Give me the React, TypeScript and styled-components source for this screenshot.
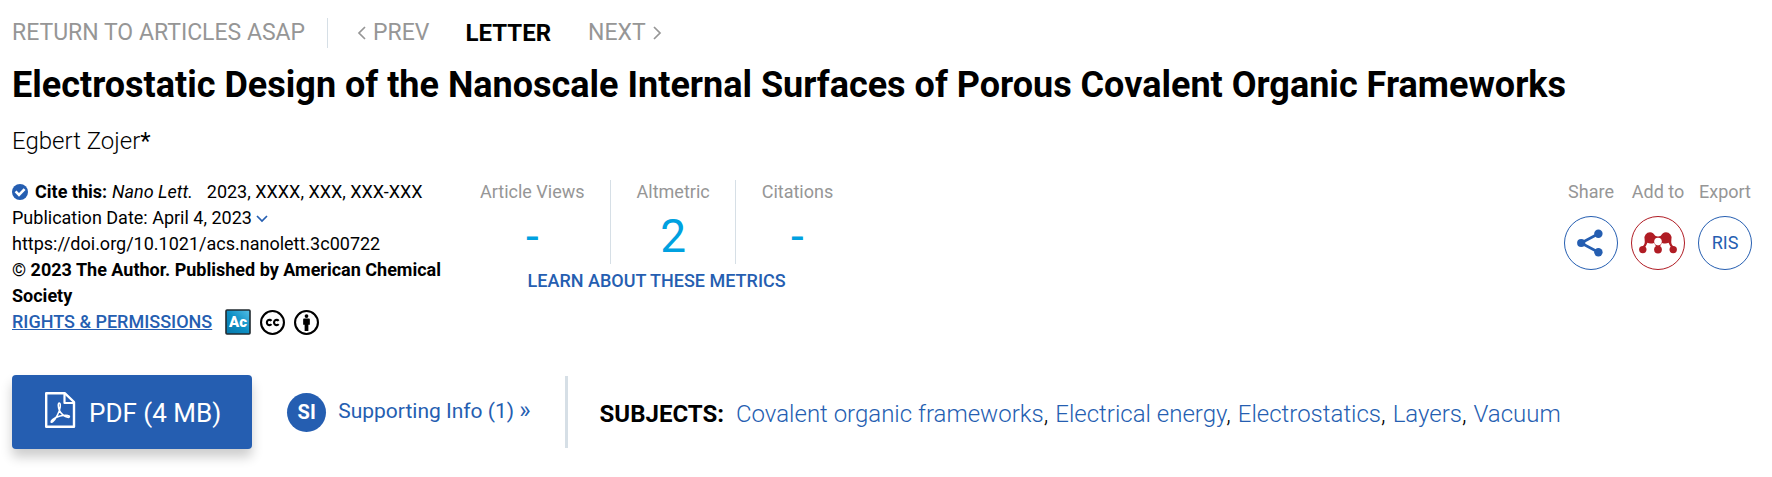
import styled, { createGlobalStyle } from "styled-components";

const GlobalStyle = createGlobalStyle`
  *, *::before, *::after { box-sizing: border-box; }
  body {
    margin: 0;
    background: #fff;
    color: #000;
    font-family: Roboto, "Liberation Sans", sans-serif;
  }
  a { color: inherit; text-decoration: none; }
  svg { display: block; flex: none; }
`;

const blue = "#255eb1";
const grey = "#969696";
const rule = "#d6dfe6";

const Article = styled.article`
  padding: 18px 20px 28px 12px;
`;

const Nav = styled.nav`
  display: flex;
  align-items: center;
  height: 30px;
  font-size: 23px;
  line-height: 30px;
  color: ${grey};
`;

const ReturnLink = styled.a`
  padding-right: 22px;
  margin-right: 28px;
  border-right: 1px solid ${rule};
`;

const NavLink = styled.a`
  display: flex;
  align-items: center;
  gap: 6px;
`;

const NavType = styled.strong`
  margin: 0 37px 0 36px;
  font-size: 24px;
  font-weight: 700;
  color: #000;
`;

const Title = styled.h1`
  margin: 14px 0 0;
  font-size: 36px;
  line-height: 46px;
  font-weight: 700;
`;

const Author = styled.p`
  margin: 18px 0 0;
  font-size: 24px;
  line-height: 30px;
  font-weight: 300;
`;

const CorrespondingLink = styled.a`
  font-weight: 400;
`;

const Details = styled.div`
  display: flex;
  align-items: flex-start;
  margin-top: 23px;
  font-size: 18px;
  line-height: 26px;
`;

const Citation = styled.div`
  width: 440px;
  margin-right: 28px;
`;

const Line = styled.p<{ $bold?: boolean }>`
  display: ${(p) => (p.$bold ? "block" : "flex")};
  align-items: center;
  margin: 0;
  font-weight: ${(p) => (p.$bold ? 700 : 400)};
`;

const CiteLabel = styled.strong`
  margin: 0 5px 0 7px;
  font-weight: 700;
`;

const Journal = styled.em`
  margin-right: 14px;
`;

const DateButton = styled.button`
  padding: 0 4px;
  border: 0;
  background: none;
`;

const Rights = styled.div`
  display: flex;
  align-items: center;
  gap: 9px;
`;

const RightsLink = styled.a`
  margin-right: 4px;
  font-weight: 500;
  color: ${blue};
  text-decoration: underline;
`;

const Metrics = styled.div`
  display: flex;
  flex-direction: column;
  align-items: center;
  padding-top: 1px;
`;

const MetricList = styled.div`
  display: flex;
`;

const Metric = styled.div`
  padding: 0 25px 0 26px;
  height: 84px;
  text-align: center;
  color: ${grey};
  & + & { border-left: 1px solid ${rule}; }
  &:first-child { padding-left: 0; }
  &:last-child { padding-right: 0; }
`;

const MetricLabel = styled.div`
  line-height: 24px;
`;

const MetricValue = styled.div`
  margin-top: 4px;
  font-size: 46px;
  line-height: 56px;
  color: #00a1e0;
`;

const LearnLink = styled.a`
  margin-top: 4px;
  font-weight: 500;
  color: ${blue};
`;

const Tools = styled.div`
  display: flex;
  gap: 13px;
  margin-left: auto;
  padding-top: 1px;
`;

const Tool = styled.div`
  display: flex;
  flex-direction: column;
  align-items: center;
  gap: 12px;
  width: 54px;
  line-height: 24px;
  white-space: nowrap;
  color: ${grey};
`;

const RoundButton = styled.button<{ $color: string }>`
  display: flex;
  align-items: center;
  justify-content: center;
  width: 54px;
  height: 54px;
  padding: 0;
  border: 1px solid ${(p) => p.$color};
  border-radius: 50%;
  background: #fff;
  color: ${(p) => p.$color};
  font: inherit;
`;

const Actions = styled.div`
  display: flex;
  align-items: center;
  margin-top: 40px;
`;

const PdfButton = styled.button`
  display: flex;
  align-items: center;
  gap: 13px;
  height: 74px;
  padding: 2px 31px 0 32px;
  border: 0;
  border-radius: 4px;
  background: ${blue};
  box-shadow: 0 8px 12px rgba(0, 0, 0, 0.2);
  color: #fff;
  font-family: inherit;
  font-size: 26px;
  line-height: 36px;
  white-space: nowrap;

  svg { margin-bottom: 6px; }
`;

const SupportingLink = styled.a`
  display: flex;
  align-items: center;
  gap: 12px;
  height: 72px;
  margin-left: 35px;
  padding-right: 34px;
  border-right: 3px solid ${rule};
  font-size: 21px;
  line-height: 26px;
  white-space: nowrap;
  color: ${blue};
`;

const SupportingText = styled.span`
  padding-bottom: 4px;
`;

const Guillemet = styled.span`
  font-size: 24px;
`;

const SiBadge = styled.span`
  display: flex;
  align-items: center;
  justify-content: center;
  width: 39px;
  height: 39px;
  border-radius: 50%;
  background: ${blue};
  color: #fff;
  font-size: 20px;
  font-weight: 700;
`;

const Subjects = styled.div`
  display: flex;
  flex-wrap: wrap;
  column-gap: 7px;
  margin-left: 32px;
  padding-top: 4px;
  font-size: 24px;
  line-height: 30px;
  font-weight: 300;
`;

const SubjectsLabel = styled.strong`
  margin-right: 5px;
  font-weight: 700;
`;

const SubjectLink = styled.a`
  color: ${blue};
`;

const Chevron = ({ d, width, height, color }: { d: string; width: number; height: number; color: string }) => (
  <svg width={width} height={height} viewBox={`0 0 ${width} ${height}`} fill="none" stroke={color} strokeWidth="1.7" aria-hidden="true">
    <path d={d} />
  </svg>
);

const CheckIcon = () => (
  <svg width="16" height="16" viewBox="0 0 16 16" aria-hidden="true">
    <circle cx="8" cy="8" r="8" fill={blue} />
    <path d="M3.6 7.4 7 10.8 12.6 5.2" fill="none" stroke="#fff" strokeWidth="2.6" />
  </svg>
);

const AuthorChoiceIcon = () => (
  <svg width="26" height="26" viewBox="0 0 26 26" role="img" aria-label="ACS AuthorChoice">
    <defs>
      <linearGradient id="ac" x1="1" y1="0" x2="0" y2="1">
        <stop offset="0" stopColor="#55c0e8" />
        <stop offset="0.5" stopColor="#0d8fc4" />
        <stop offset="1" stopColor="#0878aa" />
      </linearGradient>
    </defs>
    <rect x="1" y="1" width="24" height="24" rx="1" fill="url(#ac)" stroke="#222b30" strokeWidth="1.6" />
    <text x="13" y="18" textAnchor="middle" fontSize="15" fontWeight="900" fill="#fff">Ac</text>
  </svg>
);

const CcIcon = () => (
  <svg width="25" height="25" viewBox="0 0 24 24" fill="none" stroke="#000" role="img" aria-label="Creative Commons">
    <circle cx="12" cy="12" r="11" strokeWidth="2" />
    <path d="M11 10.4A2.5 2.5 0 1 0 11 13.6M17.9 10.4A2.5 2.5 0 1 0 17.9 13.6" strokeWidth="2" />
  </svg>
);

const ByIcon = () => (
  <svg width="25" height="25" viewBox="0 0 24 24" role="img" aria-label="Attribution">
    <circle cx="12" cy="12" r="11" fill="none" stroke="#000" strokeWidth="2" />
    <circle cx="12" cy="5.8" r="1.8" />
    <path d="M9.6 8.2h4.8a.8.8 0 0 1 .8.8v5.2h-1.4v6h-3.6v-6H8.8V9a.8.8 0 0 1 .8-.8z" />
  </svg>
);

const ShareIcon = () => (
  <svg width="28" height="28" viewBox="0 0 28 28" fill="currentColor" aria-hidden="true">
    <path d="M21 5 4 14 21 23" fill="none" stroke="currentColor" strokeWidth="2.6" />
    <circle cx="4.2" cy="14" r="4.1" />
    <circle cx="21.4" cy="4.8" r="4.2" />
    <circle cx="21.4" cy="23.2" r="4.2" />
  </svg>
);

const MendeleyIcon = () => (
  <svg width="38" height="22" viewBox="0 0 38 22" fill="currentColor" aria-hidden="true">
    <path d="M11 0.2C13.5 0.2 15 1.8 16.2 3.8Q19 5.2 21.8 3.8C23 1.8 24.5 0.2 27 0.2A5.6 5.6 0 0 1 32.4 7.2Q31.6 12.5 34.6 14.5L33.2 16.5Q30.6 14 29.6 10.8Q26.8 12.2 23 11L20.6 15H17.4L15 11Q11.2 12.2 8.4 10.8Q7.4 14 4.8 16.5L3.4 14.5Q6.4 12.5 5.6 7.2A5.6 5.6 0 0 1 11 .2z" />
    <circle cx="19" cy="9.6" r="3.8" fill="#fff" />
    <circle cx="3.8" cy="17.6" r="3.7" />
    <circle cx="19" cy="17.6" r="3.9" />
    <circle cx="34.2" cy="17.6" r="3.7" />
  </svg>
);

const PdfIcon = () => (
  <svg width="32" height="36" viewBox="0 0 32 36" fill="none" stroke="#fff" strokeLinejoin="round" aria-hidden="true">
    <path d="M2.2 1.3H21L30 10V34.7H2.2Z" strokeWidth="2.4" />
    <path d="M20.5 1.5V11H29.8" strokeWidth="2.2" />
    <path d="M15.3 11C13.8 11 14 15 15.4 18.4C17 22 20.5 24.6 24.5 25.4C25.8 25.4 25.8 23.4 24 23.4C19.5 22.8 12.5 24.2 8.6 27.6C6.2 30 6.9 31 8.8 29.6C11.8 27.4 15.6 19.5 16.2 15.2C16.5 12.2 16.1 11 15.3 11Z" strokeWidth="1.5" />
  </svg>
);

const metrics = [
  { label: "Article Views", value: "-" },
  { label: "Altmetric", value: "2" },
  { label: "Citations", value: "-" },
];

const subjects = ["Covalent organic frameworks", "Electrical energy", "Electrostatics", "Layers", "Vacuum"];

export default function App() {
  return (
    <>
      <GlobalStyle />
      <Article>
        <Nav aria-label="Articles">
          <ReturnLink href="#asap">RETURN TO ARTICLES ASAP</ReturnLink>
          <NavLink href="#prev">
            <Chevron d="M9 2 3 8 9 14" width={11} height={16} color={grey} />
            PREV
          </NavLink>
          <NavType>LETTER</NavType>
          <NavLink href="#next">
            NEXT
            <Chevron d="M2 2 8 8 2 14" width={11} height={16} color={grey} />
          </NavLink>
        </Nav>
        <Title>Electrostatic Design of the Nanoscale Internal Surfaces of Porous Covalent Organic Frameworks</Title>
        <Author>
          <a href="#author">Egbert Zojer</a>
          <CorrespondingLink href="#corresponding">*</CorrespondingLink>
        </Author>
        <Details>
          <Citation>
            <Line>
              <CheckIcon />
              <CiteLabel>Cite this:</CiteLabel>
              <Journal>Nano Lett.</Journal>
              <span>2023, XXXX, XXX, XXX-XXX</span>
            </Line>
            <Line>
              Publication Date: April 4, 2023
              <DateButton aria-label="Publication history">
                <Chevron d="M1 2 6 7 11 2" width={12} height={9} color={blue} />
              </DateButton>
            </Line>
            <Line>
              <a href="https://doi.org/10.1021/acs.nanolett.3c00722">https://doi.org/10.1021/acs.nanolett.3c00722</a>
            </Line>
            <Line $bold>© 2023 The Author. Published by American Chemical Society</Line>
            <Rights>
              <RightsLink href="#rights">RIGHTS &amp; PERMISSIONS</RightsLink>
              <AuthorChoiceIcon />
              <CcIcon />
              <ByIcon />
            </Rights>
          </Citation>
          <Metrics>
            <MetricList>
              {metrics.map((m) => (
                <Metric key={m.label}>
                  <MetricLabel>{m.label}</MetricLabel>
                  <MetricValue>{m.value}</MetricValue>
                </Metric>
              ))}
            </MetricList>
            <LearnLink href="#metrics">LEARN ABOUT THESE METRICS</LearnLink>
          </Metrics>
          <Tools>
            <Tool>
              Share
              <RoundButton $color={blue} aria-label="Share">
                <ShareIcon />
              </RoundButton>
            </Tool>
            <Tool>
              Add to
              <RoundButton $color="#b01c24" aria-label="Add to Mendeley">
                <MendeleyIcon />
              </RoundButton>
            </Tool>
            <Tool>
              Export
              <RoundButton $color={blue}>RIS</RoundButton>
            </Tool>
          </Tools>
        </Details>
        <Actions>
          <PdfButton>
            <PdfIcon />
            PDF (4 MB)
          </PdfButton>
          <SupportingLink href="#supporting">
            <SiBadge>SI</SiBadge>
            <SupportingText>
              Supporting Info (1) <Guillemet>»</Guillemet>
            </SupportingText>
          </SupportingLink>
          <Subjects>
            <SubjectsLabel>SUBJECTS:</SubjectsLabel>
            {subjects.map((s, i) => (
              <span key={s}>
                <SubjectLink href="#subject">{s}</SubjectLink>
                {i < subjects.length - 1 && ","}
              </span>
            ))}
          </Subjects>
        </Actions>
      </Article>
    </>
  );
}
